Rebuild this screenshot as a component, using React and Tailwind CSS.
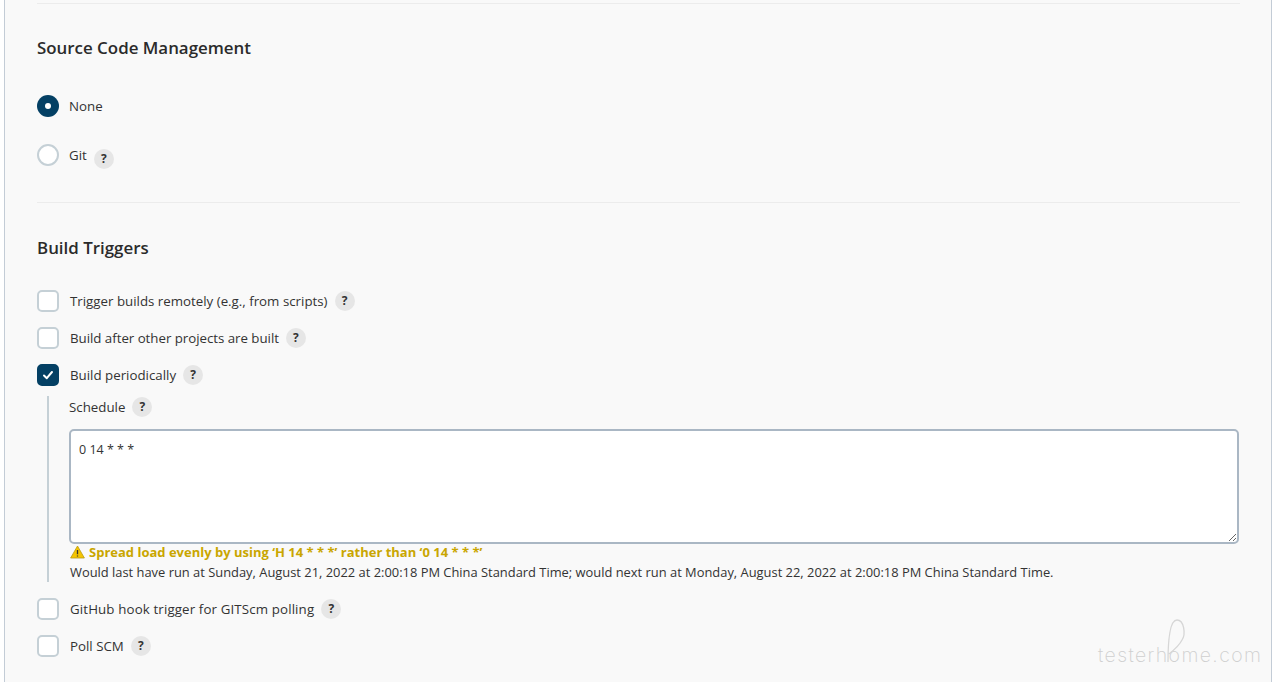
import React from 'react';

const font = { fontFamily: '"Open Sans", "Noto Sans", sans-serif' };

const Help = ({ className = '' }) => (
  <span className={`flex h-5 w-5 shrink-0 items-center justify-center rounded-full bg-[#e6e6e6] text-[12px] font-bold text-[#333] ${className}`}>?</span>
);

const Checkbox = ({ label, checked, labelClass = '' }) => (
  <div className="flex h-[37px] items-center">
    <span className={`flex h-[22px] w-[22px] shrink-0 items-center justify-center rounded-[5px] border-2 ${checked ? 'border-[#044064] bg-[#044064]' : 'border-[#c5d0d6] bg-white'}`}>
      {checked && (
        <svg width="12" height="12" viewBox="0 0 12 12" fill="none" stroke="white" strokeWidth="2" strokeLinecap="round" strokeLinejoin="round">
          <path d="M2 6.5 4.8 9.2 10 3" />
        </svg>
      )}
    </span>
    <span className={`ml-[11px] text-[13.3px] font-medium leading-5 text-[#333] ${labelClass}`}>{label}</span>
    <Help className="ml-[7px]" />
  </div>
);

const Radio = ({ label, checked, help }) => (
  <div className="flex h-[22px] items-center">
    {checked ? (
      <span className="flex h-[22px] w-[22px] shrink-0 items-center justify-center rounded-full bg-[#044064]">
        <span className="h-[6px] w-[6px] rounded-full bg-white" />
      </span>
    ) : (
      <span className="h-[22px] w-[22px] shrink-0 rounded-full border-2 border-[#c5d0d6] bg-white" />
    )}
    <span className="ml-[10px] text-[13.3px] font-medium leading-5 text-[#333]">{label}</span>
    {help && <Help className="ml-[7px] mt-[7px]" />}
  </div>
);

export default function App() {
  return (
    <div className="relative h-[682px] w-[1272px] overflow-hidden bg-white pl-1" style={font}>
      <div className="h-full border-x border-[#c3ccd6] bg-[#f9f9f9] pl-8 pr-[31px] pt-[3px]">
        <div className="h-px bg-[#ececec]" />

        <h2 className="mt-[33px] text-[16.9px] font-semibold leading-[22px] text-[#2b2b2b]">Source Code Management</h2>
        <div className="mt-[36px] flex flex-col gap-[27px]">
          <Radio label="None" checked />
          <Radio label="Git" help />
        </div>

        <div className="mt-[36px] h-px bg-[#ececec]" />

        <h2 className="mt-[34px] text-[16.9px] font-semibold leading-[22px] text-[#2b2b2b]">Build Triggers</h2>
        <div className="mt-[23px]">
          <Checkbox label="Trigger builds remotely (e.g., from scripts)" />
          <Checkbox label="Build after other projects are built" labelClass="-tracking-[0.03px]" />
          <Checkbox label="Build periodically" checked />

          <div className="ml-[10px] mt-[3px] border-l-2 border-[#c5d0d6] pl-[20px] pt-[1px]">
            <div className="flex h-5 items-center">
              <span className="text-[13.3px] font-medium leading-5 text-[#333]">Schedule</span>
              <Help className="ml-[7px]" />
            </div>
            <textarea
              readOnly
              defaultValue="0 14 * * *"
              className="mt-[12px] block h-[115px] w-[1170px] rounded-[5px] border-2 border-[#aab7c4] bg-white px-2 pb-2 pt-[9px] text-[12.5px] leading-5 text-[#333] outline-none"
            />
            <div className="-mt-[1px] flex h-[18px] items-center text-[13px] font-bold leading-[18px] text-[#c9a600]">
              <svg width="15" height="14" viewBox="0 0 15 14" className="ml-[1px] mr-1 shrink-0">
                <path d="M7.5 1 14.4 13H.6Z" fill="#f5c400" stroke="#b89a10" strokeWidth="0.8" strokeLinejoin="round" />
                <path d="M7.5 5v4.2M7.5 10.4v1.2" stroke="#333" strokeWidth="1.3" />
              </svg>
              <span>Spread load evenly by using ‘H 14 * * *’ rather than ‘0 14 * * *’</span>
            </div>
            <div className="ml-[1px] mt-[1px] text-[12.9px] leading-5 text-[#333]">
              Would last have run at Sunday, August 21, 2022 at 2:00:18 PM China Standard Time; would next run at Monday, August 22, 2022 at 2:00:18 PM China Standard Time.
            </div>
          </div>

          <div className="mt-[8px]">
            <Checkbox label="GitHub hook trigger for GITScm polling" labelClass="tracking-[0.13px]" />
            <Checkbox label="Poll SCM" />
          </div>
        </div>
      </div>

      {/* watermark */}
      <div className="absolute left-[1098px] top-[641px] text-[19.5px] font-extralight leading-7 tracking-[1.4px] text-[#cfcfcf]" style={{ fontFamily: 'Inter, sans-serif' }}>
        testerhome.com
      </div>
      <svg className="absolute left-[1152px] top-[610px]" width="40" height="56" viewBox="0 0 40 56" fill="none" stroke="#d6d6d6" strokeWidth="1.3">
        <path d="M16 52C16 30 18 10 25 10c7 0 9 14 5 20-3 6-8 10-13 14" />
      </svg>
    </div>
  );
}
